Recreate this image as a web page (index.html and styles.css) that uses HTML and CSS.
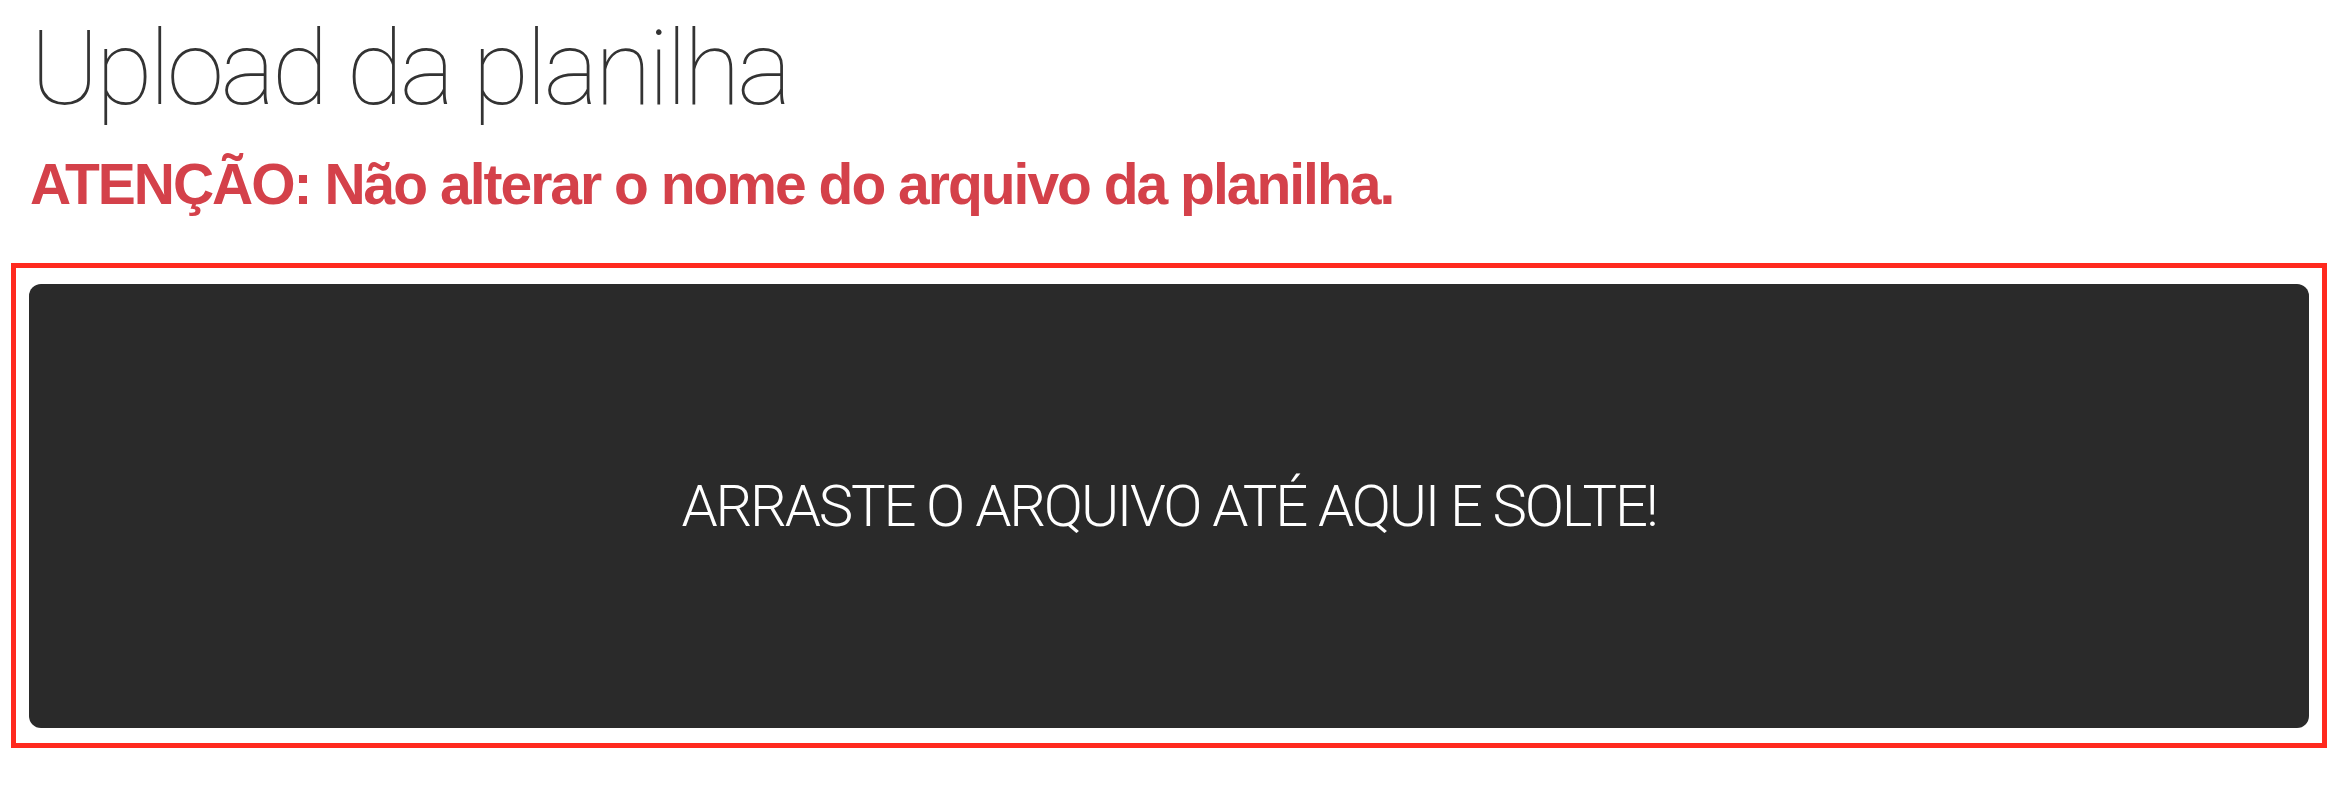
FILE: index.html
```html
<!DOCTYPE html>
<html lang="pt-BR">
<head>
<meta charset="utf-8">
<title>Upload da planilha</title>
<link rel="stylesheet" href="styles.css">
</head>
<body>
<header class="page-header">
  <h1 class="page-title">Upload da planilha</h1>
  <p class="warning">ATENÇÃO: Não alterar o nome do arquivo da planilha.</p>
</header>
<section class="drop-frame">
  <div class="drop-zone">
    <span class="drop-text">ARRASTE O ARQUIVO ATÉ AQUI E SOLTE!</span>
  </div>
</section>
</body>
</html>
```
FILE: styles.css
```css
html, body {
  margin: 0;
  padding: 0;
  background: #ffffff;
}

body {
  font-family: "Roboto", "Liberation Sans", sans-serif;
}

.page-header {
  padding: 17px 0 0 30px;
}

.page-title {
  margin: 0;
  font-family: "Roboto", sans-serif;
  font-weight: 100;
  font-size: 104px;
  line-height: 104px;
  height: 104px;
  color: #333333;
  letter-spacing: -3.6px;
}

.warning {
  margin: 35px 0 0 0;
  font-family: "Liberation Sans", Arial, sans-serif;
  font-weight: 700;
  font-size: 57px;
  line-height: 57px;
  height: 57px;
  color: #d4414a;
  letter-spacing: -2px;
}

.drop-frame {
  margin: 50px 15px 0 11px;
  border: 5px solid #ff2a1f;
  padding: 16px 13px 15px 13px;
}

.drop-zone {
  height: 444px;
  background: #2a2a2a;
  border-radius: 12px;
  display: flex;
  align-items: center;
  justify-content: center;
}

.drop-text {
  font-family: "Roboto", sans-serif;
  font-weight: 300;
  font-size: 58px;
  color: #ffffff;
  letter-spacing: -2.2px;
}
```
